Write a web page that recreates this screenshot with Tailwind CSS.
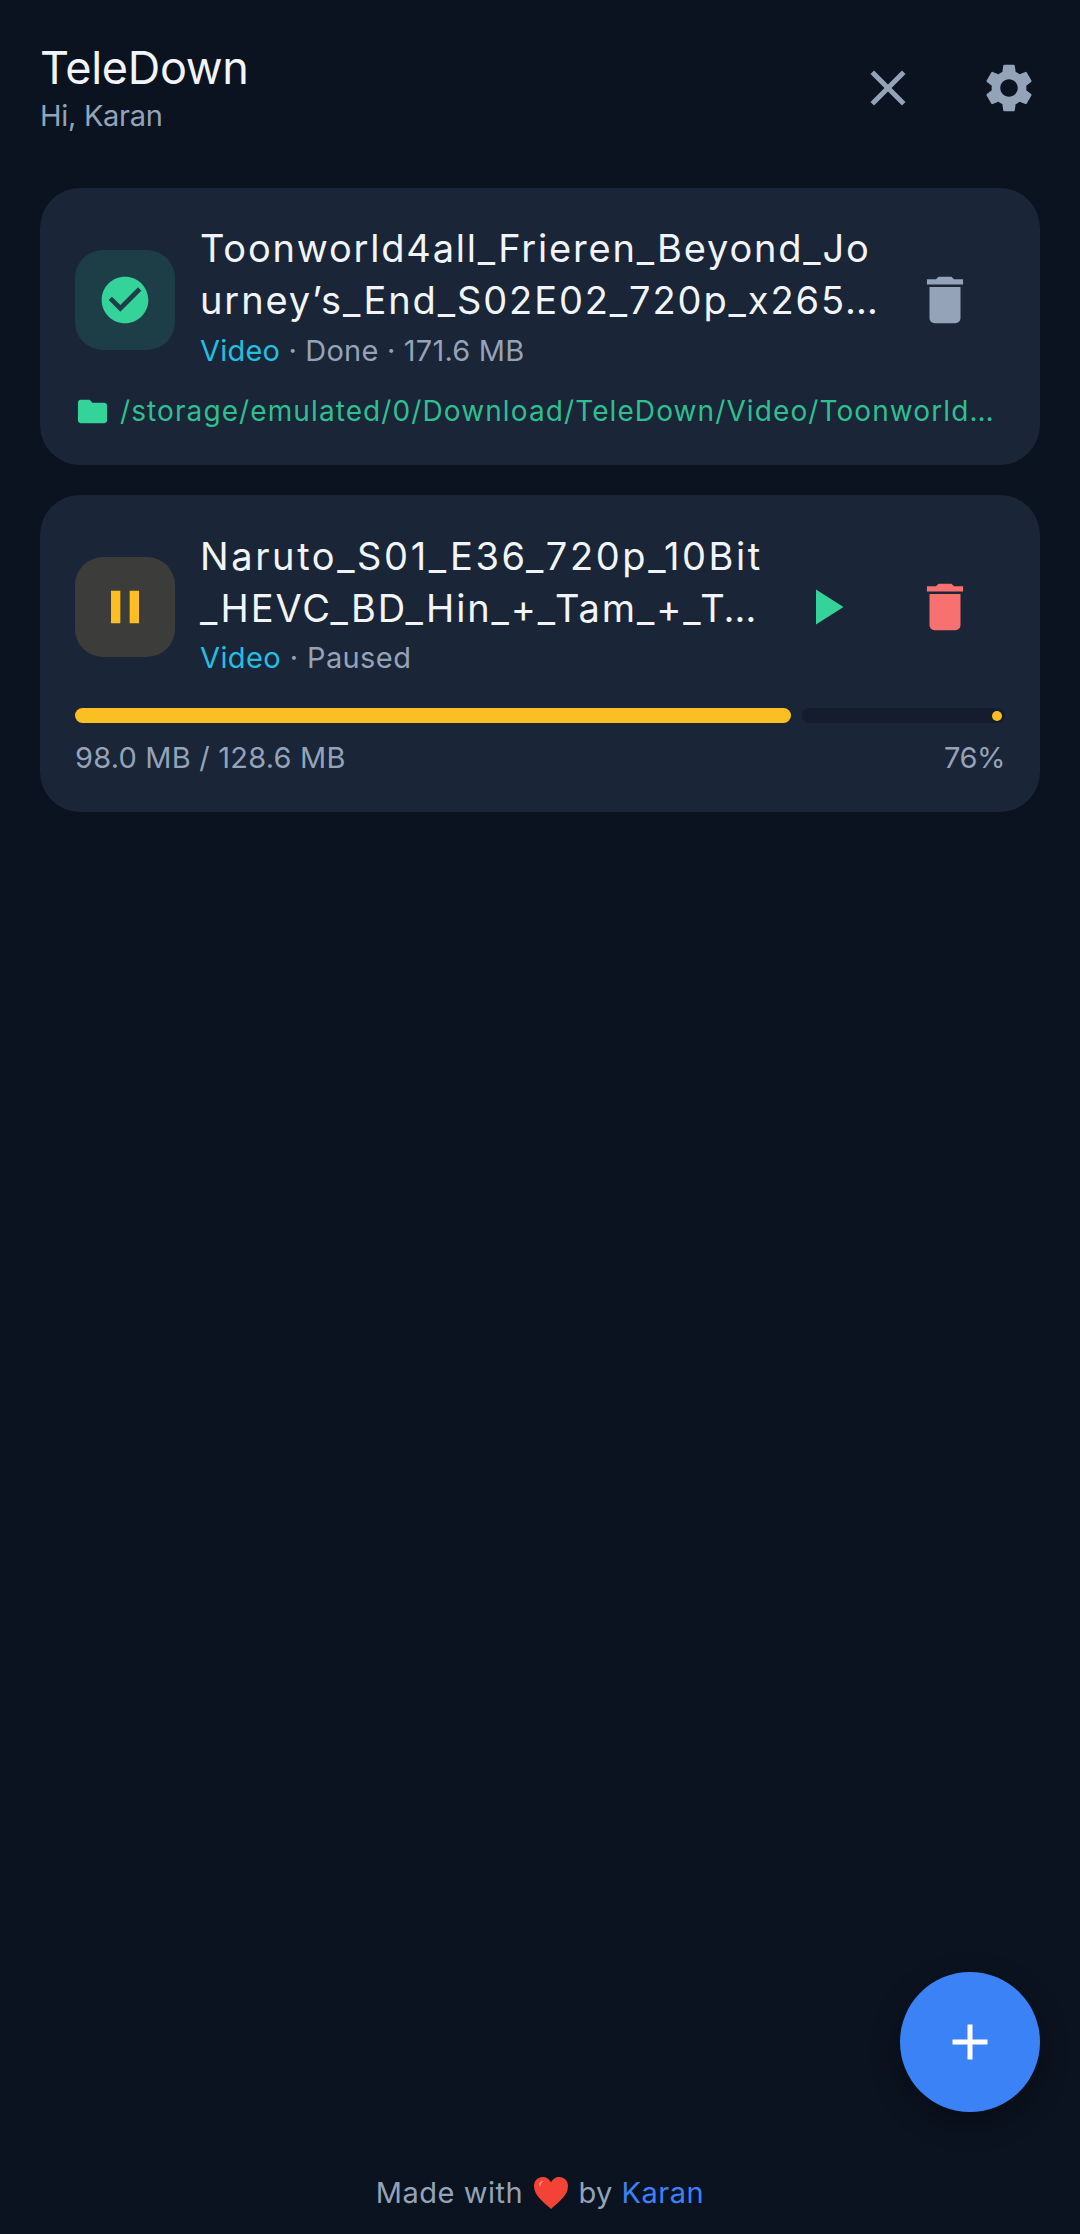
<!DOCTYPE html>
<html><head><meta charset="utf-8"><script src="https://cdn.jsdelivr.net/npm/@tailwindcss/browser@4"></script></head>
<body class="m-0 bg-[#0b1320]">
<div class="relative w-[1080px] h-[2234px] flex flex-col bg-[#0b1320] font-['Inter',sans-serif] overflow-hidden">
  <header class="flex justify-between pl-10 pr-[42px] pt-[41px] h-[188px] items-start">
    <div class="flex flex-col">
      <div class="text-[45px] leading-[54px] tracking-[-0.3px] text-[#f1f5f9]">TeleDown</div>
      <div class="text-[29px] leading-[38px] tracking-[-0.3px] mt-[2px] text-[#94a3b8]">Hi, Karan</div>
    </div>
    <div class="flex items-center gap-[62px] pt-[17px]">
      <svg class="w-[60px] h-[60px] text-[#94a3b8]" viewBox="0 0 24 24" fill="currentColor"><path d="M19 6.41 17.59 5 12 10.59 6.41 5 5 6.41 10.59 12 5 17.59 6.41 19 12 13.41 17.59 19 19 17.59 13.41 12z"/></svg>
      <svg class="w-[58px] h-[58px] text-[#94a3b8]" viewBox="0 0 24 24" fill="currentColor"><path d="M19.14 12.94c.04-.3.06-.61.06-.94 0-.32-.02-.64-.07-.94l2.03-1.58c.18-.14.23-.41.12-.61l-1.92-3.32c-.12-.22-.37-.29-.59-.22l-2.39.96c-.5-.38-1.03-.7-1.62-.94l-.36-2.54c-.04-.24-.24-.41-.48-.41h-3.84c-.24 0-.43.17-.47.41l-.36 2.54c-.59.24-1.13.57-1.62.94l-2.39-.96c-.22-.08-.47 0-.59.22L2.74 8.87c-.12.21-.08.47.12.61l2.03 1.58c-.05.3-.09.63-.09.94s.02.64.07.94l-2.03 1.58c-.18.14-.23.41-.12.61l1.92 3.32c.12.22.37.29.59.22l2.39-.96c.5.38 1.03.7 1.62.94l.36 2.54c.05.24.24.41.48.41h3.84c.24 0 .44-.17.47-.41l.36-2.54c.59-.24 1.13-.56 1.62-.94l2.39.96c.22.08.47 0 .59-.22l1.92-3.32c.12-.22.07-.47-.12-.61l-2.01-1.58zM12 15.6c-1.98 0-3.6-1.62-3.6-3.6s1.62-3.6 3.6-3.6 3.6 1.62 3.6 3.6-1.62 3.6-3.6 3.6z"/></svg>
    </div>
  </header>

  <main class="flex flex-col gap-[30px] px-10">
    <article class="h-[277px] rounded-[40px] bg-[#1a2537] pl-[35px] pr-[32px] pt-[34px]">
      <div class="flex items-center h-[156px]">
        <div class="w-[100px] h-[100px] shrink-0 rounded-[28px] bg-[#1e3e47] flex items-center justify-center">
          <svg class="w-[56px] h-[56px] text-[#34d399]" viewBox="0 0 24 24" fill="currentColor"><path d="M12 2C6.48 2 2 6.48 2 12s4.48 10 10 10 10-4.48 10-10S17.52 2 12 2zm-2 15l-5-5 1.41-1.41L10 14.17l7.59-7.59L19 8l-9 9z"/></svg>
        </div>
        <div class="ml-[25px] w-[684px] pb-[7px] flex flex-col">
          <div class="text-[38px] leading-[52px] tracking-[1.8px] text-[#f1f5f9] whitespace-nowrap">Toonworld4all_Frieren_Beyond_Jo</div>
          <div class="text-[38px] leading-[52px] tracking-[1.9px] text-[#f1f5f9] whitespace-nowrap">urney’s_End_S02E02_720p_x265…</div>
          <div class="text-[29px] leading-[42px] mt-[4px] tracking-[0.2px] text-[#94a3b8] whitespace-nowrap"><span class="text-[#22bfe0]">Video</span> · Done · 171.6 MB</div>
        </div>
        <svg class="ml-[30px] w-[62px] h-[62px] shrink-0 text-[#94a3b8]" viewBox="0 0 24 24" fill="currentColor"><path d="M6 19c0 1.1.9 2 2 2h8c1.100 0 2-.9 2-2V7H6v12zM19 4h-3.5l-1-1h-5l-1 1H5v2h14V4z"/></svg>
      </div>
      <div class="flex items-center mt-[15px] h-[36px]">
        <svg class="w-[35px] h-[35px] shrink-0 text-[#34d399]" viewBox="0 0 24 24" fill="currentColor"><path d="M10 4H4c-1.1 0-1.99.9-1.99 2L2 18c0 1.1.9 2 2 2h16c1.1 0 2-.9 2-2V8c0-1.1-.9-2-2-2h-8l-2-2z"/></svg>
        <div class="ml-[10px] text-[28px] leading-[36px] tracking-[1.1px] text-[#2fbf91] whitespace-nowrap">/storage/emulated/0/Download/TeleDown/Video/Toonworld…</div>
      </div>
    </article>

    <article class="h-[317px] rounded-[40px] bg-[#1a2537] pl-[35px] pr-[35px] pt-[34px]">
      <div class="flex items-center h-[156px]">
        <div class="w-[100px] h-[100px] shrink-0 rounded-[28px] bg-[#3c3d3a] flex items-center justify-center">
          <svg class="w-[56px] h-[56px] text-[#fbbf24]" viewBox="0 0 24 24" fill="currentColor"><path d="M6 19h4V5H6v14zm8-14v14h4V5h-4z"/></svg>
        </div>
        <div class="ml-[25px] w-[570px] pb-[6px] flex flex-col">
          <div class="text-[38px] leading-[52px] tracking-[2.6px] text-[#f1f5f9] whitespace-nowrap">Naruto_S01_E36_720p_10Bit</div>
          <div class="text-[38px] leading-[52px] tracking-[1.9px] text-[#f1f5f9] whitespace-nowrap">_HEVC_BD_Hin_+_Tam_+_T…</div>
          <div class="text-[29px] leading-[42px] mt-[3px] tracking-[0.4px] text-[#94a3b8] whitespace-nowrap"><span class="text-[#22bfe0]">Video</span> · Paused</div>
        </div>
        <svg class="ml-[26px] w-[60px] h-[60px] shrink-0 text-[#34d399]" viewBox="0 0 24 24" fill="currentColor"><path d="M8 5v14l11-7z"/></svg>
        <svg class="ml-[58px] w-[62px] h-[62px] shrink-0 text-[#f87171]" viewBox="0 0 24 24" fill="currentColor"><path d="M6 19c0 1.1.9 2 2 2h8c1.100 0 2-.9 2-2V7H6v12zM19 4h-3.5l-1-1h-5l-1 1H5v2h14V4z"/></svg>
      </div>
      <div class="flex mt-[23px] h-[15px] gap-[11px]">
        <div class="w-[716px] h-full rounded-full bg-[#fbbf24]"></div>
        <div class="flex-1 h-full rounded-full bg-[#141c2d] flex items-center justify-end pr-[3px]">
          <div class="w-[10px] h-[10px] rounded-full bg-[#fbbf24]"></div>
        </div>
      </div>
      <div class="flex justify-between mt-[16px] text-[29px] leading-[38px] text-[#94a3b8]">
        <span class="tracking-[0.2px]">98.0 MB / 128.6 MB</span><span class="tracking-[-0.5px]">76%</span>
      </div>
    </article>
  </main>

  <button class="absolute left-[900px] top-[1972px] w-[140px] h-[140px] rounded-full bg-[#3b82f6] flex items-center justify-center shadow-[0_10px_30px_rgba(0,0,0,0.3)]">
    <svg class="w-[60px] h-[60px] text-white" viewBox="0 0 24 24" fill="currentColor"><path d="M19 13h-6v6h-2v-6H5v-2h6V5h2v6h6v2z"/></svg>
  </button>

  <footer class="mt-auto mb-[22px] h-[38px] flex items-center justify-center text-[29px] leading-[38px] tracking-[0.5px] text-[#94a3b8] whitespace-pre">
    <span>Made with </span><svg class="w-[36px] h-[34px] mx-[1px]" viewBox="0 0 36 34"><path d="M18 33C10 26 1 19 1 10 1 4.500 5 1 9.500 1 13 1 16.500 3 18 6.500 19.500 3 23 1 26.500 1 31 1 35 4.500 35 10 35 19 26 26 18 33Z" fill="#f44336"/><path d="M6 8C7 5.500 9 4.500 11 5 9 6 7.500 8 7 11Z" fill="#ff8a80"/></svg><span> by </span><span class="text-[#3b82f6]">Karan</span>
  </footer>
</div>
</body></html>
